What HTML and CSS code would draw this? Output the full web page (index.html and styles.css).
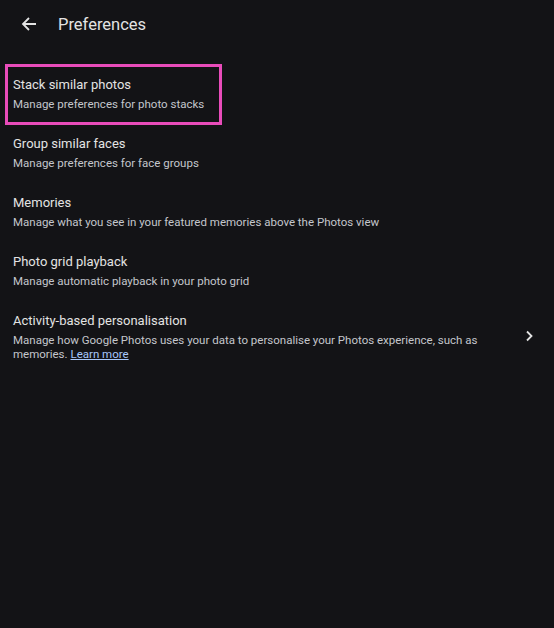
FILE: index.html
```html
<!DOCTYPE html>
<html>
<head>
    <title>Preferences</title>
    <link rel="stylesheet" href="styles.css">
</head>
<body>
    <div class="header">
        <svg class="back" width="16" height="16" viewBox="0 0 16 16">
            <path d="M15 8H2M8 2L2 8l6 6" fill="none" stroke="#e3e3e3" stroke-width="1.8"/>
        </svg>
        <span class="heading">Preferences</span>
    </div>

    <div class="list">
        <span class="highlight"></span>

        <div class="item">
            <div class="text">
                <div class="title">Stack similar photos</div>
                <div class="sub">Manage preferences for photo stacks</div>
            </div>
        </div>

        <div class="item">
            <div class="text">
                <div class="title">Group similar faces</div>
                <div class="sub">Manage preferences for face groups</div>
            </div>
        </div>

        <div class="item">
            <div class="text">
                <div class="title">Memories</div>
                <div class="sub">Manage what you see in your featured memories above the Photos view</div>
            </div>
        </div>

        <div class="item">
            <div class="text">
                <div class="title">Photo grid playback</div>
                <div class="sub">Manage automatic playback in your photo grid</div>
            </div>
        </div>

        <div class="item">
            <div class="text">
                <div class="title">Activity-based personalisation</div>
                <div class="sub">Manage how Google Photos uses your data to personalise your Photos experience, such as memories. <a href="#">Learn more</a></div>
            </div>
            <svg class="chevron" width="10" height="12" viewBox="0 0 10 12">
                <path d="M3 1.5l4.5 4.5L3 10.5" fill="none" stroke="#e3e3e3" stroke-width="1.8"/>
            </svg>
        </div>
    </div>
</body>
</html>
```

FILE: styles.css
```css
body {
    margin: 0;
    background: #131316;
    font-family: Roboto, "Noto Sans", sans-serif;
    color: #e3e3e3;
    height: 628px;
}

.header {
    height: 48px;
    display: flex;
    align-items: center;
}

.back {
    margin-left: 21px;
    margin-right: 21px;
}

.heading {
    font-size: 16.5px;
    padding-top: 1px;
}

.list {
    position: relative;
    padding: 27px 0 0 13px;
    display: flex;
    flex-direction: column;
    gap: 23px;
}

.highlight {
    position: absolute;
    left: 5px;
    top: 16px;
    width: 211px;
    height: 55px;
    border: 3px solid #e94cba;
}

.item {
    display: flex;
    align-items: center;
    padding-right: 20px;
}

.text {
    flex: 1;
    max-width: 480px;
}

.title {
    font-size: 13px;
    line-height: 20px;
}

.sub {
    font-size: 11.5px;
    line-height: 14px;
    margin-top: 2px;
    color: #c4c6cc;
}

.sub a {
    display: inline-block;
    color: #a8c7fa;
}

.chevron {
    margin-left: auto;
}
```
